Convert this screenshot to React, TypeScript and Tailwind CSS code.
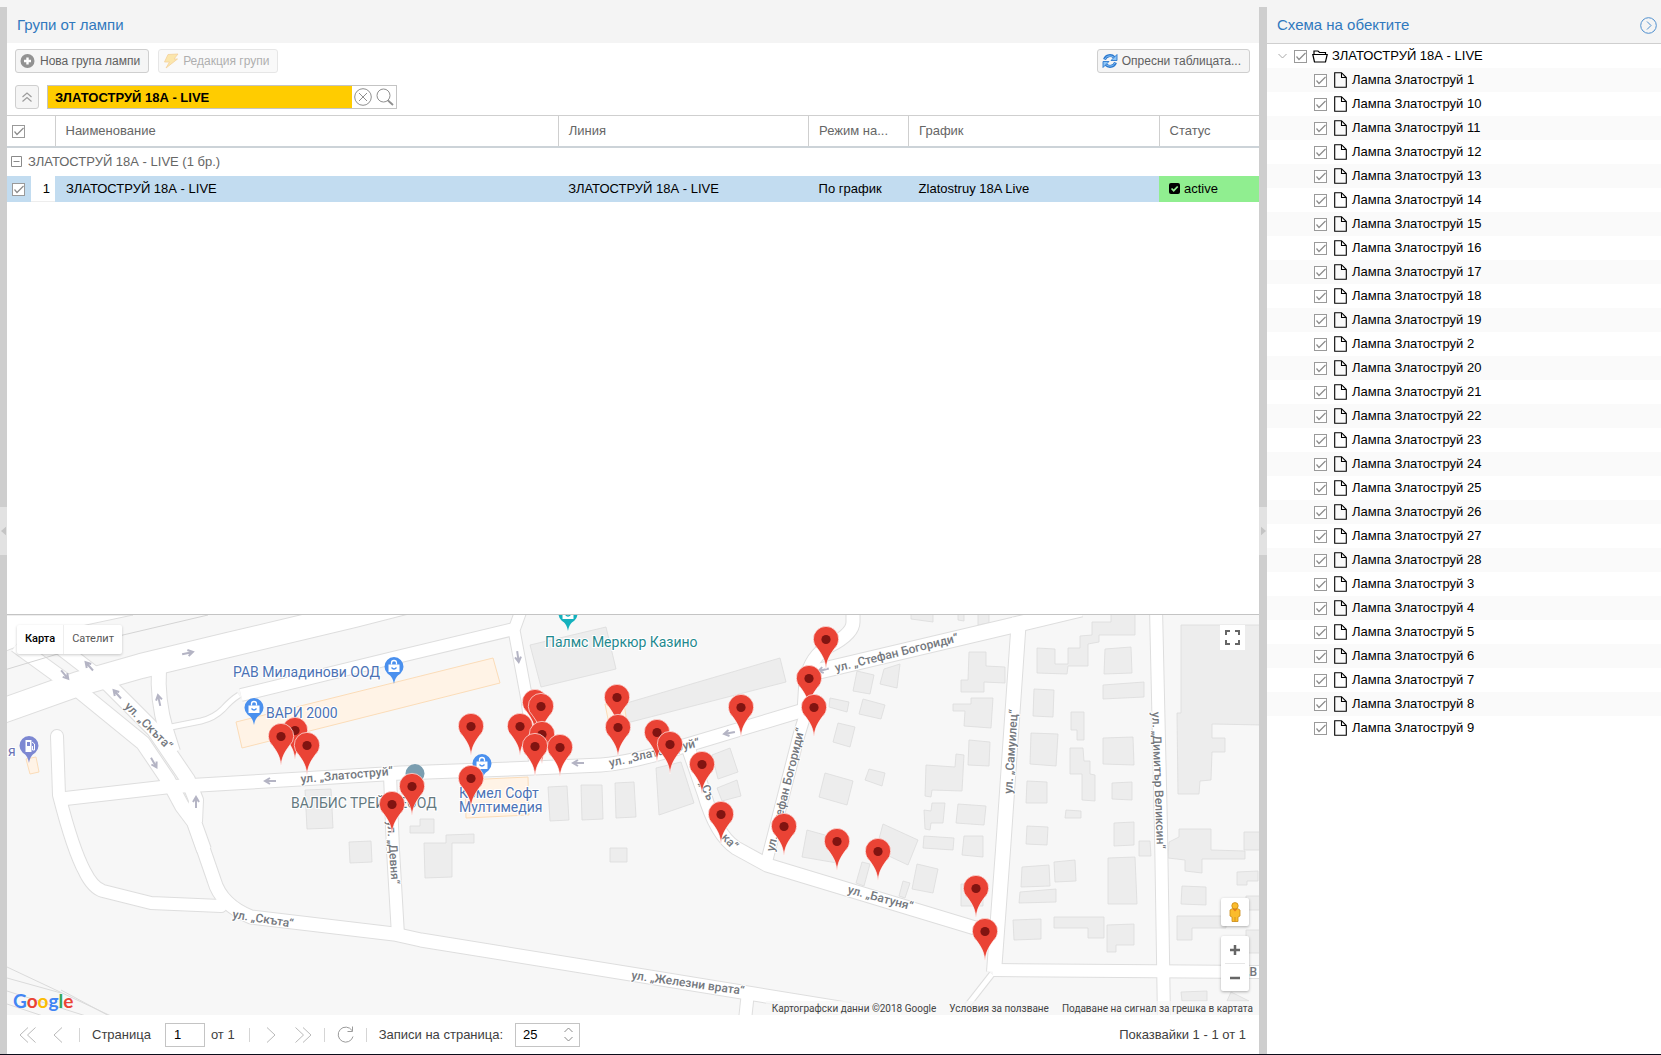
import { useState } from "react";
import type { ReactNode } from "react";

const lampNumbers = [
  1, 10, 11, 12, 13, 14, 15, 16, 17, 18, 19, 2, 20, 21, 22, 23, 24, 25, 26, 27,
  28, 3, 4, 5, 6, 7, 8, 9,
];

const groupName = "ЗЛАТОСТРУЙ 18А - LIVE";

// [x, y] of the pin's tip, drawn north to south so that lower pins overlap upper ones
const lampPins: [number, number][] = [
  [825, 668], [808, 707], [616, 726], [534, 731], [540, 735], [740, 736], [813, 736],
  [470, 755], [519, 755], [617, 756], [294, 759], [656, 761], [541, 763], [280, 765],
  [669, 773], [306, 774], [534, 775], [559, 776], [701, 793], [470, 807], [411, 815],
  [391, 833], [720, 843], [783, 855], [836, 870], [877, 880], [975, 917], [984, 960],
];

const roads: { d: string; w: number }[] = [
  { d: "M-10 715L77 684L140 666L227 645L353 615L420 598", w: 24 },
  { d: "M15 645L77 690L142 743L167 780L181 806L193 822L203 850", w: 14 },
  { d: "M60 648L108 685L153 730L187 780L195 800L194 822", w: 14 },
  { d: "M158 668Q156 700 165 730L172 752", w: 14 },
  { d: "M170 727L200 721Q213 718 222 709Q230 700 238 695", w: 5 },
  { d: "M240 695L400 656L513 629", w: 12 },
  { d: "M521 608L513 630L526 700L534 765", w: 11 },
  { d: "M60 799L165 787L250 782L400 773L533 768L600 765Q630 763 683 746L803 710", w: 13 },
  { d: "M803 712L805 680Q810 656 828 646Q852 634 852 622L852 608", w: 13 },
  { d: "M810 673L1013 625L1080 609", w: 15 },
  { d: "M805 712L798 735L766 860", w: 11 },
  { d: "M688 750L703 793Q715 835 735 848L766 865L984 931", w: 13 },
  { d: "M1018 618L1002 850L993 972", w: 14 },
  { d: "M1155 608L1160 830L1163 1020", w: 12 },
  { d: "M992 970L1265 972", w: 12 },
  { d: "M991 974L966 1006", w: 5 },
  { d: "M56 736L58 795Q72 850 84 872Q92 888 102 891L150 903L220 906", w: 12 },
  { d: "M193 822L213 880Q220 905 250 917L393 934L420 940L630 974L900 1018", w: 13 },
  { d: "M389 775L392 850L397 935", w: 12 },
  { d: "M747 992L744 1020", w: 12 },
];

const buildings = [
  "529,645 605,627 615,669 540,687",
  "612,707 779,658 785,682 622,724",
  "304,790 330,789 332,828 306,829",
  "348,842 370,841 371,862 349,863",
  "409,826 419,826 419,819 433,819 433,833 409,833",
  "445,835 473,834 473,843 451,843 451,877 424,878 423,843 445,843",
  "609,848 626,848 626,862 609,862",
  "547,787 566,786 568,820 549,821",
  "580,785 601,785 602,819 581,820",
  "614,783 633,782 635,817 615,818",
  "655,768 680,762 693,803 658,815",
  "711,755 729,748 737,772 717,779",
  "716,788 736,780 740,796 721,801",
  "856,671 873,675 869,694 852,691",
  "883,669 899,664 896,688 879,684",
  "829,698 848,702 846,712 828,707",
  "862,699 884,705 880,719 858,714",
  "837,723 854,727 849,747 832,742",
  "824,773 852,781 846,805 818,797",
  "868,769 884,773 881,786 864,780",
  "806,830 842,840 836,863 801,857",
  "882,824 917,840 907,865 875,850",
  "861,862 869,864 863,886 855,883",
  "902,881 909,883 904,898 898,896",
  "916,864 937,869 932,893 911,889",
  "960,884 982,884 982,906 960,906",
  "910,610 932,610 932,622 910,619",
  "957,610 963,610 963,621 957,620",
  "977,610 988,610 988,623 977,625",
  "968,652 985,652 985,666 1004,667 1004,683 983,682 983,692 960,692 960,680 967,680",
  "952,704 970,704 970,698 992,698 990,728 963,726 964,711 952,711",
  "968,740 989,742 988,766 967,765",
  "925,765 954,767 955,754 963,755 961,791 931,790 930,797 924,796",
  "923,810 930,811 931,803 944,803 942,823 930,823 929,830 924,829",
  "957,804 985,806 983,825 955,823",
  "923,836 953,838 952,850 922,848",
  "963,836 982,836 982,857 961,855",
  "1036,648 1054,649 1054,664 1067,664 1067,648 1079,648 1079,636 1091,635 1091,622 1110,622 1110,610 1134,610 1134,635 1098,635 1098,642 1087,644 1087,666 1067,666 1066,674 1036,673",
  "1104,649 1130,647 1131,673 1103,674",
  "1102,685 1143,682 1143,697 1102,699",
  "1033,689 1053,690 1052,717 1032,716",
  "1070,712 1083,712 1083,740 1076,740 1076,730 1070,730",
  "1030,733 1057,734 1055,766 1029,764",
  "1069,748 1082,748 1083,761 1089,761 1089,774 1094,775 1094,801 1081,800 1081,774 1069,774",
  "1102,738 1132,737 1133,765 1102,764",
  "1026,781 1046,782 1046,803 1025,803",
  "1111,783 1131,782 1131,800 1111,799",
  "1065,810 1080,811 1080,818 1064,818",
  "1026,826 1047,827 1046,845 1025,844",
  "1113,823 1133,822 1133,845 1113,846",
  "1138,841 1149,841 1150,856 1138,856",
  "1021,867 1048,865 1049,886 1020,887",
  "1053,862 1074,860 1075,881 1054,882",
  "1107,858 1134,857 1136,904 1107,904",
  "1019,892 1055,889 1055,902 1018,903",
  "1012,920 1040,919 1040,939 1013,940",
  "1053,917 1103,917 1103,938 1087,938 1087,928 1053,928",
  "1106,925 1133,924 1133,945 1115,945 1115,952 1106,952",
  "1180,625 1262,625 1262,725 1211,724 1211,738 1224,738 1224,752 1211,752 1210,780 1199,781 1198,794 1177,794 1176,713 1180,713",
  "1178,829 1210,829 1210,850 1244,851 1244,859 1201,859 1201,873 1184,871 1184,860 1167,858 1168,842 1178,837",
  "1243,832 1262,832 1262,850 1243,850",
  "1236,872 1257,871 1257,881 1246,881 1246,885 1236,885",
  "1181,886 1205,887 1205,905 1180,904",
  "1176,916 1225,916 1225,928 1191,928 1191,940 1176,940",
  "1245,896 1262,896 1262,910 1245,910",
  "1245,930 1262,930 1262,953 1245,953",
  "1180,992 1206,991 1206,1001 1181,1001",
  "1230,992 1248,1001 1226,1001",
];

const shops = [
  "235,722 492,658 499,683 241,748",
  "464,780 527,777 528,815 465,818",
  "25,759 35,757 38,772 29,774",
  "604,704 622,698 626,722 608,724",
];

const streetLabels = [
  { x: 123, y: 707, a: 45, t: "ул. „Скъта“" },
  { x: 231, y: 918, a: 9, t: "ул. „Скъта“" },
  { x: 300, y: 783, a: -5, t: "ул. „Златоструй“" },
  { x: 609, y: 767, a: -13, t: "ул. „Златоструй“" },
  { x: 386, y: 821, a: 86, t: "ул. „Девня“" },
  { x: 835, y: 672, a: -14, t: "ул. „Стефан Богориди“" },
  { x: 773, y: 852, a: -76, t: "ул. „Стефан Богориди“" },
  { x: 698, y: 783, a: 65, t: "„Съ" },
  { x: 720, y: 838, a: 46, t: "ка“" },
  { x: 1011, y: 794, a: -86, t: "ул. „Самуилец“" },
  { x: 1151, y: 712, a: 88, t: "ул. „Димитър Великсин“" },
  { x: 846, y: 893, a: 15, t: "ул. „Батуня“" },
  { x: 630, y: 979, a: 8, t: "ул. „Железни врата“" },
  { x: 1244, y: 976, a: 0, t: "„В" },
];

// one-way arrows
const arrows = [
  [187, 653, -12], [64, 675, 50], [88, 666, 228], [116, 694, 228], [158, 700, 258],
  [153, 763, 60], [195, 802, 270], [269, 781, 180], [517, 657, 82], [577, 763, 180],
  [728, 733, 170], [822, 670, 165],
];

function Check({ label, className = "" }: { label: string; className?: string }) {
  return (
    <span className={`relative inline-block h-[13px] w-[13px] shrink-0 ${className}`}>
      <input
        type="checkbox"
        defaultChecked
        aria-label={label}
        className="peer block h-full w-full appearance-none border border-[#9a9a9a] bg-white"
      />
      <svg viewBox="0 0 13 13" className="pointer-events-none absolute inset-0 hidden h-full w-full peer-checked:block">
        <path d="M2.5 6.5L5 9.5L11.5 3" fill="none" stroke="#8c8c8c" strokeWidth="1.2" />
      </svg>
    </span>
  );
}

function ToolButton({ icon, children, disabled }: { icon: ReactNode; children: ReactNode; disabled?: boolean }) {
  return (
    <button
      type="button"
      disabled={disabled}
      className="flex h-6 items-center gap-1 rounded-[3px] border border-[#cfcfcf] bg-[#f5f5f5] pl-1 pr-2 text-[12px] text-[#606060] disabled:opacity-50"
    >
      {icon}
      {children}
    </button>
  );
}

function PlusIcon() {
  return (
    <svg viewBox="0 0 16 16" className="h-4 w-4">
      <circle cx="7.5" cy="8" r="7" fill="#929292" />
      <path d="M7.5 4.5V11.5M4 8H11" stroke="#fff" strokeWidth="2.4" />
    </svg>
  );
}

function BoltIcon() {
  return (
    <svg viewBox="0 0 16 16" className="h-4 w-4">
      <path d="M5 1.5L15 1L11 6H14.5L3 15L6.5 9H1.5Z" fill="#f9cf5c" stroke="#e8a33a" strokeWidth="0.8" />
    </svg>
  );
}

function RefreshIcon() {
  return (
    <svg viewBox="0 0 16 16" className="h-4 w-4">
      <path d="M2.5 6.5C4 2 9.5 1.5 12.3 4.5" fill="none" stroke="#2a78cf" strokeWidth="3" />
      <path d="M3 6C4.500 2.500 9 2 12 4.500" fill="none" stroke="#8cc4f5" />
      <path d="M15 1.5V7.5H9Z" fill="#8cc4f5" stroke="#2a78cf" strokeWidth="0.9" />
      <path d="M13.5 9.5C12 14 6.5 14.5 3.7 11.5" fill="none" stroke="#2a78cf" strokeWidth="3" />
      <path d="M13 10C11.500 13.500 7 14 4 11.500" fill="none" stroke="#8cc4f5" />
      <path d="M1 14.5V8.5H7Z" fill="#8cc4f5" stroke="#2a78cf" strokeWidth="0.9" />
    </svg>
  );
}

function Splitter({ side }: { side: "left" | "right" }) {
  return (
    <div className={`mt-[7px] flex flex-col justify-center bg-[#cecece] ${side === "left" ? "w-[7px]" : "w-2"}`}>
      <button
        type="button"
        aria-label={side === "left" ? "Скрий левия панел" : "Скрий десния панел"}
        className="flex h-12 w-full items-center justify-center bg-[#e2e2e2]"
      >
        <svg viewBox="0 0 6 10" className="h-[10px] w-[5px]">
          <path d={side === "left" ? "M6 0V10L0 5Z" : "M0 0V10L6 5Z"} fill="#c4c4c4" />
        </svg>
      </button>
    </div>
  );
}

function LampPin({ x, y }: { x: number; y: number }) {
  return (
    <g transform={`translate(${x} ${y})`}>
      <path
        d="M0 1C-1-9-4-13-8.5-19.5A12.7 12.7 0 1 1 8.5-19.5C4-13 1-9 0 1Z"
        fill="#ea4335"
        stroke="#fff"
        strokeOpacity="0.8"
        strokeWidth="0.8"
      />
      <circle cy="-28.5" r="4.6" fill="#811411" />
    </g>
  );
}

function PlacePin({ x, y, color, kind }: { x: number; y: number; color: string; kind?: "bag" | "fuel" }) {
  return (
    <g transform={`translate(${x} ${y})`}>
      <path d="M0 17C-1 11-3 9-6.5 6.5A9.5 9.5 0 1 1 6.5 6.5C3 9 1 11 0 17Z" fill={color} />
      {kind === "bag" && (
        <>
          <path d="M-5.5-2.5H5.5V5H-5.5Z" fill="#fff" />
          <path d="M-2.5-2.5V-4A2.5 2.5 0 0 1 2.5-4V-2.5" fill="none" stroke="#fff" strokeWidth="1.3" />
          <path d="M-2.5 0.5Q0 3.5 2.5 0.5" fill="none" stroke={color} strokeWidth="1.3" />
        </>
      )}
      {kind === "fuel" && (
        <>
          <path d="M-3.5-6H2.5V6H-3.5Z" fill="#fff" />
          <path d="M-2-4H1V0H-2Z" fill={color} />
          <path d="M3-4L5.5-2V4H3.5V0" fill="none" stroke="#fff" />
        </>
      )}
    </g>
  );
}

function StreetMap() {
  return (
    <svg
      viewBox="6 615 1252 400"
      preserveAspectRatio="xMidYMid slice"
      className="block h-full w-full bg-[#f7f7f7] font-[Roboto,sans-serif]"
      role="img"
      aria-label="Карта на лампите"
    >
      <g fill="none" stroke="#dadada">
        <path d="M6 967L110 1016M6 978L60 993M60 990L110 1017M6 991L85 1016M6 1004L42 1016" />
      </g>
      <g fill="#ededed" stroke="#dcdcdc" strokeWidth="0.8">
        {buildings.map((p) => (
          <polygon key={p} points={p} />
        ))}
      </g>
      <g fill="#fff3e6" stroke="#fbdcb8">
        {shops.map((p) => (
          <polygon key={p} points={p} />
        ))}
      </g>
      <path d="M0 615H132L85 625L40 637L0 653Z" fill="#fff" stroke="#dedede" />
      <g fill="none" stroke="#dedede" strokeLinejoin="round">
        {roads.map((r) => (
          <path key={r.d} d={r.d} strokeWidth={r.w + 2} strokeLinecap={r.d.startsWith("M56 736") ? "round" : "butt"} />
        ))}
      </g>
      <g fill="none" stroke="#fff" strokeLinejoin="round">
        {roads.map((r) => (
          <path key={r.d} d={r.d} strokeWidth={r.w} strokeLinecap={r.d.startsWith("M56 736") ? "round" : "butt"} />
        ))}
      </g>
      <path d="M0 671L60 653L122 635L207 615" fill="none" stroke="#d4d4d4" />
      <g fill="none" stroke="#b4b4c4" strokeWidth="2">
        {arrows.map(([x, y, a]) => (
          <path key={`${x}-${y}`} d="M-6 0H4M0-3L5 0L0 3" transform={`translate(${x} ${y}) rotate(${a})`} />
        ))}
      </g>
      <g fontSize="12" fontWeight="500" fill="#74787e" stroke="#fff" strokeWidth="2" paintOrder="stroke">
        {streetLabels.map((l) => (
          <text key={`${l.x}-${l.y}`} transform={`translate(${l.x} ${l.y}) rotate(${l.a})`}>
            {l.t}
          </text>
        ))}
      </g>
      <PlacePin x={393} y={667} color="#4a90ee" kind="bag" />
      <PlacePin x={253} y={708} color="#4a90ee" kind="bag" />
      <PlacePin x={481} y={764} color="#4a90ee" kind="bag" />
      <PlacePin x={28} y={746} color="#7d88d2" kind="fuel" />
      <PlacePin x={414} y={774} color="#7b9eb0" />
      <PlacePin x={567} y={614} color="#14b1bd" kind="bag" />
      <g fontSize="14" stroke="#fff" strokeWidth="2" paintOrder="stroke">
        <g fill="#4b72b5">
          <text x="232" y="677">РАВ Миладинови ООД</text>
          <text x="265" y="718">ВАРИ 2000</text>
          <text x="458" y="798">Комел Софт</text>
          <text x="458" y="812">Мултимедия</text>
        </g>
        <text x="544" y="647" fill="#1f8a8f">Палмс Меркюр Казино</text>
        <text x="290" y="808" fill="#64797f">ВАЛБИС ТРЕЙД ЕООД</text>
        <text x="7" y="756" fill="#6a73b5">я</text>
      </g>
      {lampPins.map(([x, y]) => (
        <LampPin key={`${x}-${y}`} x={x} y={y} />
      ))}
    </svg>
  );
}

function MapPanel() {
  return (
    <section className="relative h-[401px] shrink-0 overflow-hidden border-t border-[#c4c4c4] font-[Roboto,sans-serif]">
      <StreetMap />
      <div className="absolute left-[10px] top-[10px] flex h-[29px] rounded-[2px] bg-white text-[11px] shadow-[0_1px_3px_rgba(0,0,0,0.2)]">
        <button type="button" className="border-r border-[#eee] px-2 font-medium text-black">Карта</button>
        <button type="button" className="px-2 text-[#565656]">Сателит</button>
      </div>
      <button
        type="button"
        aria-label="Цял екран"
        className="absolute right-[14px] top-[10px] flex h-[25px] w-[25px] items-center justify-center bg-white"
      >
        <svg viewBox="0 0 15 15" className="h-[15px] w-[15px]" fill="none" stroke="#666" strokeWidth="2">
          <path d="M1 5V1H5M10 1H14V5M14 10V14H10M5 14H1V10" />
        </svg>
      </button>
      <button
        type="button"
        aria-label="Street View"
        className="absolute bottom-[89px] right-[10px] flex h-7 w-7 items-center justify-center rounded-[2px] bg-white shadow-[0_1px_3px_rgba(0,0,0,0.3)]"
      >
        <svg viewBox="0 0 12 20" className="h-5 w-3">
          <path d="M3.5 6.5H8.5L11 8V14L9 15V19.5H3V15L1 14V8Z" fill="#fbbc2c" stroke="#c98a17" strokeWidth="0.8" />
          <path d="M3.5 7L6 9.5L8.5 7" fill="#e87a1c" />
          <path d="M6 15V19.5" stroke="#c98a17" strokeWidth="0.8" />
          <circle cx="6" cy="3.8" r="3.2" fill="#fbbc2c" stroke="#c98a17" strokeWidth="0.8" />
        </svg>
      </button>
      <div className="absolute bottom-6 right-[10px] w-7 rounded-[2px] bg-white px-1 shadow-[0_1px_3px_rgba(0,0,0,0.3)]">
        <button type="button" aria-label="Увеличаване" className="flex h-7 w-full items-center justify-center border-b border-[#e6e6e6]">
          <svg viewBox="0 0 12 12" className="h-3 w-3" stroke="#666" strokeWidth="2.5">
            <path d="M1 6H11M6 1V11" />
          </svg>
        </button>
        <button type="button" aria-label="Намаляване" className="flex h-[27px] w-full items-center justify-center">
          <svg viewBox="0 0 12 12" className="h-3 w-3" stroke="#666" strokeWidth="2.5">
            <path d="M1 6H11" />
          </svg>
        </button>
      </div>
      <a href="#google" className="absolute bottom-[2px] left-[6px] font-[Lato,sans-serif] text-[19px] font-bold leading-6">
        <span className="text-[#4285f4]">G</span>
        <span className="text-[#ea4335]">o</span>
        <span className="text-[#fbbc05]">o</span>
        <span className="text-[#4285f4]">g</span>
        <span className="text-[#34a853]">l</span>
        <span className="text-[#ea4335]">e</span>
      </a>
      <div className="absolute bottom-0 right-0 flex h-[14px] items-center gap-[13px] bg-[#f7f7f7]/70 pl-1.5 pr-1.5 text-[10px] text-[#444]">
        <span>Картографски данни ©2018 Google</span>
        <a href="#terms">Условия за ползване</a>
        <a href="#report">Подаване на сигнал за грешка в картата</a>
      </div>
    </section>
  );
}

function GroupsTable() {
  return (
    <table className="w-full table-fixed border-collapse text-left text-[13px]">
      <colgroup>
        <col className="w-6" />
        <col className="w-6" />
        <col />
        <col className="w-1/5" />
        <col className="w-[100px]" />
        <col className="w-1/5" />
        <col className="w-[100px]" />
      </colgroup>
      <thead>
        <tr className="h-[31px] border-b-2 border-t border-b-[#ccd3d8] border-t-[#cfcfcf] text-[#666]">
          <th colSpan={2} className="border-r border-[#cfcfcf] pl-[5px] font-normal">
            <Check label="Избери всички" className="align-middle" />
          </th>
          <th className="border-r border-[#cfcfcf] px-[10px] font-normal">Наименование</th>
          <th className="border-r border-[#cfcfcf] px-[10px] font-normal">Линия</th>
          <th className="truncate border-r border-[#cfcfcf] px-[10px] font-normal">Режим на...</th>
          <th className="border-r border-[#cfcfcf] px-[10px] font-normal">График</th>
          <th className="px-[10px] font-normal">Статус</th>
        </tr>
      </thead>
      <tbody>
        <tr className="h-[29px] text-[#666]">
          <td colSpan={7} className="pl-1">
            <button type="button" className="flex items-center gap-1.5">
              <svg viewBox="0 0 11 11" className="h-[11px] w-[11px]" fill="none" stroke="#8a8a8a">
                <path d="M0.5 0.5H10.5V10.5H0.5ZM2.5 5.5H8.5" />
              </svg>
              {groupName} (1 бр.)
            </button>
          </td>
        </tr>
        <tr className="h-[26px] bg-[#c2dcf0] text-black">
          <td className="pl-[5px]">
            <Check label={groupName} className="align-middle" />
          </td>
          <td className="border-b border-[#ededed] bg-white pr-[5px] text-right">1</td>
          <td className="px-[11px]">{groupName}</td>
          <td className="px-[10px]">{groupName}</td>
          <td className="px-[10px]">По график</td>
          <td className="px-[10px]">Zlatostruy 18A Live</td>
          <td className="bg-[#90ee90] px-[10px]">
            <span className="flex items-center gap-1">
              <svg viewBox="0 0 11 11" className="h-[11px] w-[11px]">
                <rect width="11" height="11" rx="2" fill="#000" />
                <path d="M2.5 5.5L4.7 7.7L8.7 3.5" fill="none" stroke="#90ee90" strokeWidth="1.7" />
              </svg>
              active
            </span>
          </td>
        </tr>
      </tbody>
    </table>
  );
}

function PagerButton({ label, d, w }: { label: string; d: string; w: "narrow" | "wide" }) {
  return (
    <button type="button" aria-label={label} disabled>
      <svg
        viewBox={w === "wide" ? "0 0 18 16" : "0 0 10 16"}
        className={w === "wide" ? "h-4 w-[18px]" : "h-4 w-[10px]"}
        fill="none"
        stroke="#b9b9b9"
      >
        <path d={d} />
      </svg>
    </button>
  );
}

function Separator() {
  return <span className="h-[14px] w-px bg-[#d5d5d5]" />;
}

function Pager() {
  return (
    <footer className="flex h-[39px] shrink-0 items-center bg-white pl-3 pr-[13px] text-[13px] text-[#404040]">
      <div className="flex items-center gap-4">
        <PagerButton label="Първа страница" w="wide" d="M9 0.5L1 8L9 15.5M16.5 0.5L8.5 8L16.5 15.5" />
        <PagerButton label="Предишна страница" w="narrow" d="M9 0.5L1 8L9 15.5" />
        <Separator />
      </div>
      <label htmlFor="page" className="ml-3 mr-[14px]">Страница</label>
      <input id="page" defaultValue="1" className="h-6 w-10 border border-[#c4c4c4] px-2 text-black" />
      <span className="ml-1.5 mr-[14px]">от 1</span>
      <div className="mr-[18px] flex items-center gap-4">
        <Separator />
        <PagerButton label="Следваща страница" w="narrow" d="M1 0.5L9 8L1 15.5" />
      </div>
      <div className="flex items-center gap-3">
        <PagerButton label="Последна страница" w="wide" d="M1.5 0.5L9.5 8L1.5 15.5M9 0.5L17 8L9 15.5" />
        <Separator />
        <button type="button" aria-label="Опресни">
          <svg viewBox="0 0 17 17" className="h-[17px] w-[17px]" fill="none" stroke="#9b9b9b">
            <path d="M16 10.5A7.5 7.5 0 1 1 15 4.5M15.5 0.5V5.5H10.5" />
          </svg>
        </button>
        <Separator />
        <label htmlFor="page-size">Записи на страница:</label>
      </div>
      <div className="ml-3 flex h-6 w-[65px] items-center border border-[#c4c4c4] pr-1.5">
        <input id="page-size" defaultValue="25" className="w-full min-w-0 px-[7px] text-black outline-none" />
        <div className="flex flex-col gap-[3px]">
          <button type="button" aria-label="Увеличи">
            <svg viewBox="0 0 9 6" className="block h-1.5 w-[9px]" fill="none" stroke="#8a8a8a">
              <path d="M0.5 5L4.5 1L8.5 5" />
            </svg>
          </button>
          <button type="button" aria-label="Намали">
            <svg viewBox="0 0 9 6" className="block h-1.5 w-[9px]" fill="none" stroke="#8a8a8a">
              <path d="M0.5 1L4.5 5L8.5 1" />
            </svg>
          </button>
        </div>
      </div>
      <span className="ml-auto">Показвайки 1 - 1 от 1</span>
    </footer>
  );
}

function GroupsPanel() {
  const [filter, setFilter] = useState(groupName);

  return (
    <main className="flex min-w-0 flex-1 flex-col bg-white">
      <h1 className="flex h-[43px] shrink-0 items-center bg-[#f4f4f4] pl-[10px] pt-2 text-[15px] text-[#3079be]">
        Групи от лампи
      </h1>
      <div className="flex shrink-0 items-center gap-[9px] pl-2 pr-[9px] pt-1.5">
        <ToolButton icon={<PlusIcon />}>Нова група лампи</ToolButton>
        <ToolButton icon={<BoltIcon />} disabled>Редакция групи</ToolButton>
        <div className="ml-auto">
          <ToolButton icon={<RefreshIcon />}>Опресни таблицата...</ToolButton>
        </div>
      </div>
      <div className="flex shrink-0 items-center gap-2 px-2 pb-[6px] pt-3">
        <button
          type="button"
          aria-label="Свий групите"
          className="flex h-6 w-6 items-center justify-center rounded-[3px] border border-[#cfcfcf] bg-[#f5f5f5]"
        >
          <svg viewBox="0 0 10 10" className="h-[10px] w-[10px]" fill="none" stroke="#9c9c9c" strokeWidth="1.2">
            <path d="M0.5 5L5 1L9.5 5M0.5 9.5L5 5.5L9.5 9.5" />
          </svg>
        </button>
        <div className="flex h-6 w-[350px] items-center border border-[#c4c4c4] bg-white">
          <input
            aria-label="Търсене"
            value={filter}
            onChange={(e) => setFilter(e.target.value)}
            className="h-full min-w-0 flex-1 bg-[#ffcc00] px-[7px] text-[13px] font-bold text-black outline-none"
          />
          <button type="button" aria-label="Изчисти" className="px-0.5" onClick={() => setFilter("")}>
            <svg viewBox="0 0 18 18" className="block h-[18px] w-[18px]" fill="none" stroke="#8f8f8f">
              <circle cx="9" cy="9" r="8.3" />
              <path d="M5 5L13 13M13 5L5 13" />
            </svg>
          </button>
          <button type="button" aria-label="Търси" className="px-0.5">
            <svg viewBox="0 0 18 18" className="block h-[18px] w-[18px]" fill="none" stroke="#8f8f8f">
              <circle cx="7.5" cy="7.5" r="6.5" />
              <path d="M12 12.5L17 17" strokeWidth="1.8" />
            </svg>
          </button>
        </div>
      </div>
      <div className="min-h-0 flex-1 overflow-hidden">
        <GroupsTable />
      </div>
      <MapPanel />
      <Pager />
    </main>
  );
}

function ObjectTree() {
  return (
    <aside className="flex w-[394px] shrink-0 flex-col overflow-hidden bg-white">
      <header className="flex h-11 shrink-0 items-center justify-between border-b border-[#cfcfcf] bg-[#f4f4f4] pl-[10px] pr-1 pt-[7px]">
        <h2 className="text-[15px] text-[#3079be]">Схема на обектите</h2>
        <button type="button" aria-label="Скрий панела">
          <svg viewBox="0 0 17 17" className="block h-[17px] w-[17px]" fill="none" stroke="#4f8fce">
            <circle cx="8.5" cy="8.5" r="7.8" />
            <path d="M7 4.5L11 8.5L7 12.5" />
          </svg>
        </button>
      </header>
      <ul className="text-[13px] text-black">
        <li className="flex h-6 items-center pl-[11px]">
          <button type="button" aria-label="Свий" className="mr-[7px]">
            <svg viewBox="0 0 9 6" className="block h-1.5 w-[9px]" fill="none" stroke="#a8a8a8">
              <path d="M0.5 1L4.5 5L8.5 1" />
            </svg>
          </button>
          <Check label={groupName} />
          <svg viewBox="0 0 16 13" className="ml-[5px] mr-1 h-[13px] w-4" fill="none" stroke="#000" strokeWidth="1.2">
            <path d="M2.5 12L0.8 4.5H15.2L13.500 12ZM2 4.5V1H6L7.5 2.5H13.5V4.500" />
          </svg>
          {groupName}
        </li>
        {lampNumbers.map((n) => (
          <li key={n} className="flex h-6 items-center pl-[47px] odd:bg-white even:bg-[#fafafa]">
            <Check label={`Лампа Златоструй ${n}`} />
            <svg viewBox="0 0 13 16" className="ml-[7px] mr-[5px] h-4 w-[13px]" fill="none" stroke="#000" strokeWidth="1.1">
              <path d="M0.7 0.7H7.5L12.3 5.5V15.3H0.7ZM7.5 0.7V5.5H12.3" />
            </svg>
            Лампа Златоструй {n}
          </li>
        ))}
      </ul>
    </aside>
  );
}

export default function App() {
  return (
    <div className="flex h-screen w-full border-b border-[#0d0d1a] bg-[#f4f4f4] font-['Liberation_Sans',Arial,sans-serif]">
      <Splitter side="left" />
      <GroupsPanel />
      <Splitter side="right" />
      <ObjectTree />
    </div>
  );
}
